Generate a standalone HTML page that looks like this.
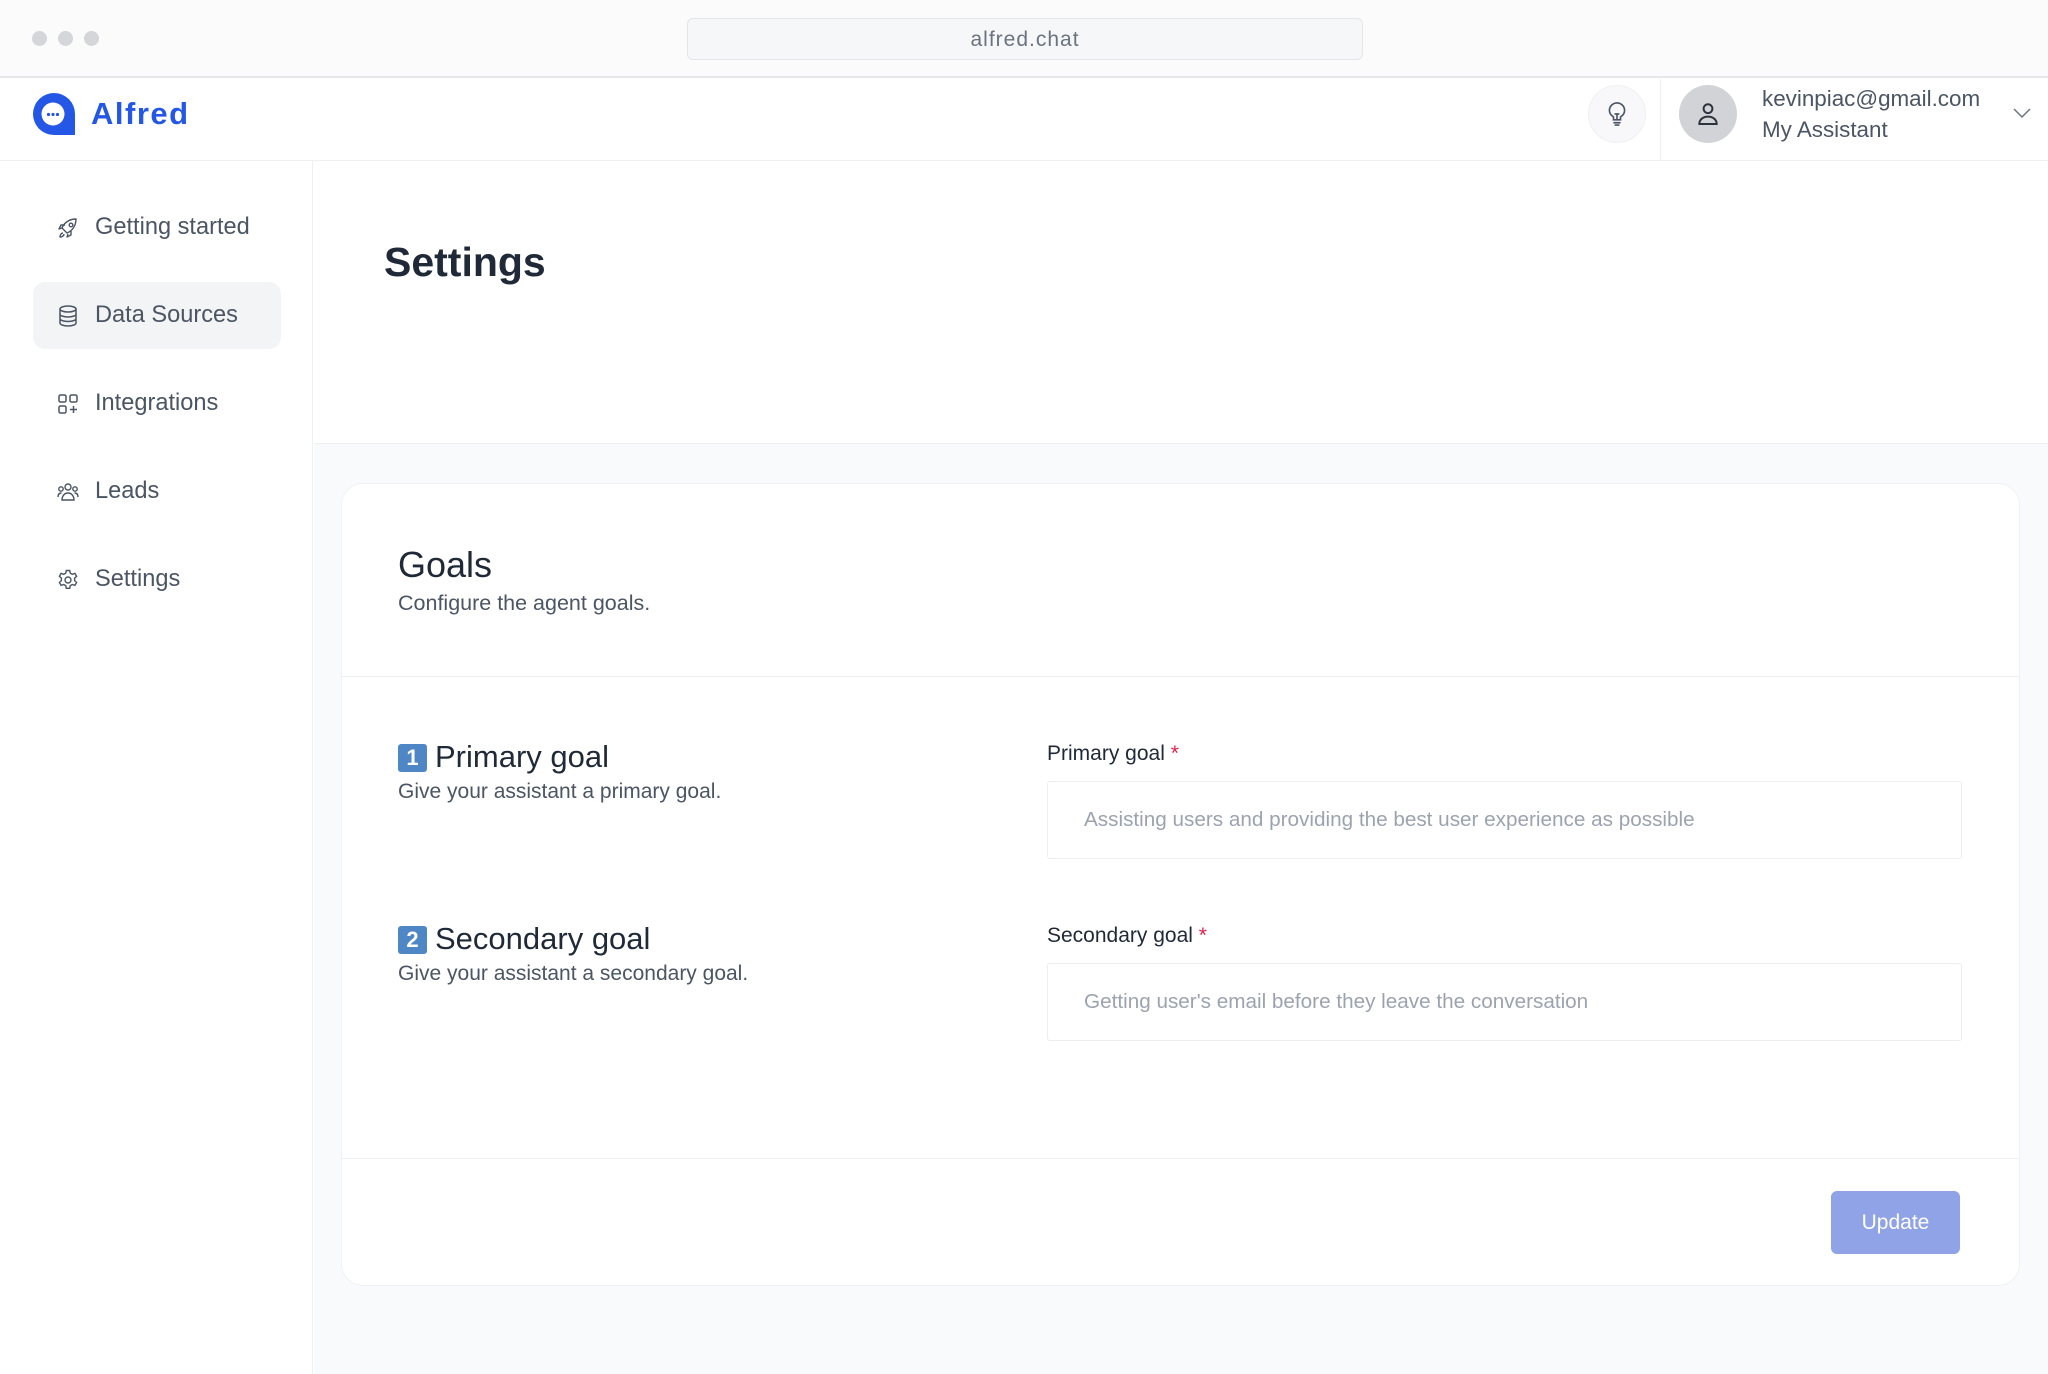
<!DOCTYPE html>
<html><head><meta charset="utf-8"><style>
*{box-sizing:border-box;margin:0;padding:0}
body{width:2048px;height:1374px;overflow:hidden;background:#fff;font-family:"Liberation Sans",sans-serif;color:#374151;position:relative}
.abs{position:absolute}
.topbar{left:0;top:0;width:2048px;height:78px;background:#fbfbfc;border-bottom:2px solid #e5e7eb}
.dot{width:15px;height:15px;border-radius:50%;background:#d4d6da;top:31px}
.addr{left:687px;top:18px;width:676px;height:42px;border:1px solid #e3e5e8;border-radius:6px;background:#f6f7f8;text-align:center;line-height:42px;font-size:21px;color:#6b7280;letter-spacing:1px}
.header{left:0;top:79px;width:2048px;height:82px;border-bottom:1px solid #eef0f2;background:#fff}
.side{left:0;top:161px;width:313px;height:1213px;border-right:1px solid #eef0f2;background:#fff}
.nav{left:33px;width:248px;height:67px;border-radius:12px;font-size:23.6px;color:#4b5563;line-height:67px;padding-left:62px}
.nav svg{position:absolute;left:23px;top:22px}
.main{left:314px;top:443px;width:1734px;height:931px;background:#f9fafc;border-top:1px solid #eef0f2}
.card{left:341px;top:483px;width:1679px;height:803px;background:#fff;border:1px solid #f0f1f4;border-radius:22px}
.badge{width:29px;height:28px;background:#4f86c6;border-radius:3px;color:#fff;font-weight:bold;font-size:22px;text-align:center;line-height:28px}
.h3{font-size:31px;color:#1f2937}
.sub{font-size:21px;color:#4b5563}
.label{font-size:21px;color:#1f2937}
.label b{color:#e11d48;font-weight:normal}
.input{left:1047px;width:915px;height:78px;border:1px solid #eceef1;border-radius:3px;font-size:20.7px;color:#9ca3af;line-height:76px;padding-left:36px;background:#fff}
</style></head><body>
<div class="abs topbar"></div>
<div class="abs dot" style="left:32px"></div>
<div class="abs dot" style="left:58px"></div>
<div class="abs dot" style="left:84px"></div>
<div class="abs addr">alfred.chat</div>

<div class="abs header"></div>
<svg class="abs" style="left:31px;top:91px" width="46" height="46" viewBox="0 0 46 46">
<path d="M23 2A21 21 0 1 0 23 44H44V23A21 21 0 0 0 23 2Z" fill="#2557e6"/>
<circle cx="22" cy="23" r="11.5" fill="#fff"/>
<circle cx="17.5" cy="23.5" r="1.6" fill="#2557e6"/><circle cx="22" cy="23.5" r="1.6" fill="#2557e6"/><circle cx="26.5" cy="23.5" r="1.6" fill="#2557e6"/>
</svg>
<div class="abs" style="left:91px;top:96px;font-size:31px;font-weight:bold;color:#2557e6;letter-spacing:1.5px">Alfred</div>

<div class="abs" style="left:1588px;top:85px;width:58px;height:58px;border-radius:50%;background:#f8f8fa;border:1px solid #f0f0f2"></div>
<svg class="abs" style="left:1603px;top:100px" width="28" height="28" viewBox="0 0 24 24" fill="none" stroke="#4b5563" stroke-width="1.4" stroke-linecap="round"><path d="M9 17v-2.5C7 13.3 5.5 11.5 5.5 9a6.5 6.5 0 0 1 13 0c0 2.5-1.5 4.3-3.5 5.5V17z"/><path d="M9.5 19.5h5M10.5 21.5h3M12 17v-5M10.5 12h3"/></svg>
<div class="abs" style="left:1660px;top:79px;width:1px;height:82px;background:#eef0f2"></div>
<div class="abs" style="left:1679px;top:85px;width:58px;height:58px;border-radius:50%;background:#d1d3d7"></div>
<svg class="abs" style="left:1692px;top:98px" width="32" height="32" viewBox="0 0 24 24" fill="none" stroke="#2d333d" stroke-width="1.5"><circle cx="12" cy="8" r="3.3"/><path d="M5.5 19.5c0-3.5 3-5.5 6.5-5.5s6.5 2 6.5 5.5z"/></svg>
<div class="abs" style="left:1762px;top:83px;font-size:22.4px;color:#4b5563;line-height:31px">kevinpiac@gmail.com<br>My Assistant</div>
<svg class="abs" style="left:2011px;top:106px" width="22" height="14" viewBox="0 0 22 14" fill="none" stroke="#6b7280" stroke-width="1.5"><path d="M3 3l8 8 8-8"/></svg>

<div class="abs side"></div>
<div class="abs nav" style="top:194px"><svg width="24" height="24" viewBox="0 0 24 24" fill="none" stroke="#4b5563" stroke-width="1.4" stroke-linejoin="round"><path d="M9 15l-3-3c2-5 7-9 14-9 0 7-4 12-9 14z"/><circle cx="15" cy="9" r="1.8"/><path d="M6 12l-3 1 2-4h4M12 18l-1 3 4-2v-4M7 17c-1.5 0-3 1.5-3 4 2.5 0 4-1.5 4-3"/></svg>Getting started</div>
<div class="abs nav" style="top:282px;background:#f3f4f6"><svg width="24" height="24" viewBox="0 0 24 24" fill="none" stroke="#4b5563" stroke-width="1.5"><ellipse cx="12" cy="5" rx="8" ry="3"/><path d="M4 5v14c0 1.7 3.6 3 8 3s8-1.3 8-3V5M4 10c0 1.7 3.6 3 8 3s8-1.3 8-3M4 14.5c0 1.7 3.6 3 8 3s8-1.3 8-3"/></svg>Data Sources</div>
<div class="abs nav" style="top:370px"><svg width="24" height="24" viewBox="0 0 24 24" fill="none" stroke="#4b5563" stroke-width="1.5"><rect x="3" y="3" width="7" height="7" rx="1.5"/><rect x="14" y="3" width="7" height="7" rx="1.5"/><rect x="3" y="14" width="7" height="7" rx="1.5"/><path d="M17.5 14v7M14 17.5h7"/></svg>Integrations</div>
<div class="abs nav" style="top:458px"><svg width="24" height="24" viewBox="0 0 24 24" fill="none" stroke="#4b5563" stroke-width="1.4"><circle cx="12" cy="7" r="3"/><circle cx="5" cy="9" r="2.2"/><circle cx="19" cy="9" r="2.2"/><path d="M6 20c0-4 2.5-7 6-7s6 3 6 7zM2 17c0-2.5 1.3-4 3.5-4M22 17c0-2.5-1.3-4-3.5-4"/></svg>Leads</div>
<div class="abs nav" style="top:546px"><svg width="24" height="24" viewBox="0 0 24 24" fill="none" stroke="#4b5563" stroke-width="1.4"><circle cx="12" cy="12" r="3"/><path d="M10.3 2.5h3.4l.6 2.7 2 1.1 2.6-.9 1.7 2.9-2 1.900v2.4l2 1.9-1.7 2.9-2.6-.9-2 1.1-.6 2.7h-3.4l-.6-2.7-2-1.1-2.6.9-1.7-2.9 2-1.9v-2.4l-2-1.9 1.7-2.9 2.6.9 2-1.1z"/></svg>Settings</div>

<div class="abs" style="left:384px;top:239px;font-size:41px;font-weight:bold;color:#1f2937">Settings</div>

<div class="abs main"></div>
<div class="abs card"></div>
<div class="abs" style="left:398px;top:544px;font-size:36px;color:#1f2937">Goals</div>
<div class="abs sub" style="left:398px;top:591px;font-size:21.5px">Configure the agent goals.</div>
<div class="abs" style="left:342px;top:676px;width:1677px;height:1px;background:#eef0f2"></div>

<div class="abs badge" style="left:398px;top:744px">1</div>
<div class="abs h3" style="left:435px;top:739px">Primary goal</div>
<div class="abs sub" style="left:398px;top:780px">Give your assistant a primary goal.</div>
<div class="abs label" style="left:1047px;top:742px">Primary goal <b>*</b></div>
<div class="abs input" style="top:781px">Assisting users and providing the best user experience as possible</div>

<div class="abs badge" style="left:398px;top:926px">2</div>
<div class="abs h3" style="left:435px;top:921px">Secondary goal</div>
<div class="abs sub" style="left:398px;top:962px">Give your assistant a secondary goal.</div>
<div class="abs label" style="left:1047px;top:924px">Secondary goal <b>*</b></div>
<div class="abs input" style="top:963px">Getting user's email before they leave the conversation</div>

<div class="abs" style="left:342px;top:1158px;width:1677px;height:1px;background:#eef0f2"></div>
<div class="abs" style="left:1831px;top:1191px;width:129px;height:63px;border-radius:6px;background:#8fa3e6;color:#fff;font-size:21px;text-align:center;line-height:63px">Update</div>
</body></html>
